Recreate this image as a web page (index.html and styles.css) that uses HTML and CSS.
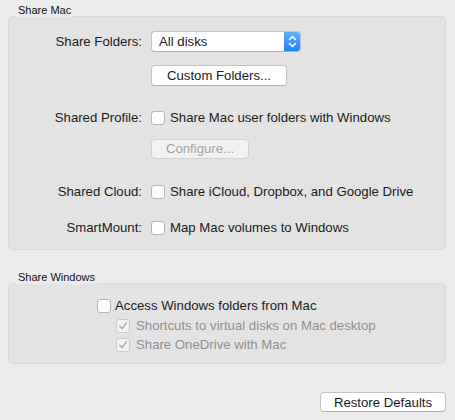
FILE: index.html
```html
<!DOCTYPE html>
<html>
<head>
<meta charset="utf-8">
<link rel="stylesheet" href="styles.css">
</head>
<body>
<div class="page">
  <section class="group">
    <div class="group-title">Share Mac</div>
    <div class="group-box mac">
      <div class="row r1">
        <span class="label">Share Folders:</span>
        <div class="popup">
          <span class="popup-text">All disks</span>
          <span class="stepper">
            <svg width="17" height="21" viewBox="0 0 17 21"><path d="M5.5 8.5 L8.5 5.5 L11.5 8.5 M5.5 12.5 L8.5 15.5 L11.5 12.5" fill="none" stroke="#fff" stroke-width="1.5" stroke-linecap="round" stroke-linejoin="round"/></svg>
          </span>
        </div>
      </div>
      <div class="row r2">
        <span class="label"></span>
        <button class="btn custom">Custom Folders...</button>
      </div>
      <div class="row r3">
        <span class="label">Shared Profile:</span>
        <label class="check"><span class="cb"></span>Share Mac user folders with Windows</label>
      </div>
      <div class="row r4">
        <span class="label"></span>
        <button class="btn configure" disabled>Configure...</button>
      </div>
      <div class="row r5">
        <span class="label">Shared Cloud:</span>
        <label class="check"><span class="cb"></span>Share iCloud, Dropbox, and Google Drive</label>
      </div>
      <div class="row r6">
        <span class="label">SmartMount:</span>
        <label class="check"><span class="cb"></span>Map Mac volumes to Windows</label>
      </div>
    </div>
  </section>

  <section class="group win-group">
    <div class="group-title">Share Windows</div>
    <div class="group-box win">
      <label class="check wrow main"><span class="cb"></span>Access Windows folders from Mac</label>
      <label class="check wrow sub disabled"><span class="cb checked"><svg width="12" height="12" viewBox="0 0 12 12"><path d="M2.8 6.2 L5 8.6 L9.4 2.8" fill="none" stroke="#a5a5a5" stroke-width="1.3" stroke-linecap="round" stroke-linejoin="round"/></svg></span>Shortcuts to virtual disks on Mac desktop</label>
      <label class="check wrow sub disabled"><span class="cb checked"><svg width="12" height="12" viewBox="0 0 12 12"><path d="M2.8 6.2 L5 8.6 L9.4 2.8" fill="none" stroke="#a5a5a5" stroke-width="1.3" stroke-linecap="round" stroke-linejoin="round"/></svg></span>Share OneDrive with Mac</label>
    </div>
  </section>

  <div class="footer">
    <button class="btn restore">Restore Defaults</button>
  </div>
</div>
</body>
</html>
```

FILE: styles.css
```css
html, body {
  margin: 0;
  padding: 0;
  background: #ececec;
}
body {
  width: 455px;
  height: 420px;
  overflow: hidden;
  font-family: "Liberation Sans", Arial, sans-serif;
  font-size: 13.2px;
  color: #1a1a1a;
}
.page {
  padding: 4px 9px 0 8px;
}
.group-title {
  position: relative;
  display: block;
  width: fit-content;
  margin-left: 8px;
  padding: 0 2px;
  height: 13px;
  line-height: 13px;
  font-size: 11px;
  background: #ececec;
  color: #111;
  margin-bottom: -1px;
}
.group-box {
  background: #e3e3e3;
  border: 1px solid #d9d9d9;
  border-radius: 5px;
  box-sizing: border-box;
}
.mac {
  padding: 14px 0 11px 0;
  height: 234px;
}
.row {
  display: grid;
  grid-template-columns: 133px auto;
  column-gap: 9px;
  align-items: center;
  height: 21px;
}
.r2 { margin-top: 13px; }
.r3 { margin-top: 21px; }
.r4 { margin-top: 10px; }
.r5 { margin-top: 22px; }
.r6 { margin-top: 15px; }
.label {
  text-align: right;
  white-space: nowrap;
}
.popup {
  display: flex;
  width: 150px;
  height: 21px;
  box-sizing: border-box;
  background: #fff;
  border: 1px solid #c2c2c2;
  border-bottom-color: #aeaeae;
  border-radius: 4px;
  overflow: hidden;
}
.popup-text {
  flex: 1;
  padding-left: 7px;
  line-height: 19px;
}
.stepper {
  width: 17px;
  margin: -1px -1px -1px 0;
  height: 21px;
  background: linear-gradient(#6cb2fb, #1b7ff9);
  border-radius: 0 4px 4px 0;
  display: flex;
}
.btn {
  justify-self: start;
  font-family: inherit;
  font-size: 13.2px;
  color: #1a1a1a;
  background: #fff;
  border: 1px solid #c4c4c4;
  border-bottom-color: #adadad;
  border-radius: 4px;
  height: 21px;
  padding: 0;
  box-sizing: border-box;
}
.custom { width: 136px; }
.configure {
  width: 98px;
  height: 20px;
  color: #a2a2a2;
  background: #f2f2f2;
  border-color: #d2d2d2;
}
.check {
  display: flex;
  align-items: center;
  gap: 5px;
  white-space: nowrap;
}
.cb {
  width: 14px;
  height: 14px;
  box-sizing: border-box;
  background: #fff;
  border: 1px solid #b5b5b5;
  border-radius: 3px;
  display: flex;
  align-items: center;
  justify-content: center;
  flex: none;
}
.win-group {
  margin-top: 21px;
}
.win {
  padding: 12px 0 9px 88px;
  height: 81px;
}
.wrow {
  height: 19px;
}
.wrow.main {
  gap: 4px;
  margin-bottom: 1px;
}
.wrow.sub {
  padding-left: 19px;
  gap: 6px;
}
.disabled {
  color: #8f8f8f;
}
.cb.checked {
  background: #f3f3f3;
  border-color: #cbcbcb;
}
.footer {
  display: flex;
  justify-content: flex-end;
  margin-top: 28px;
}
.restore {
  width: 126px;
  height: 20px;
}
```
